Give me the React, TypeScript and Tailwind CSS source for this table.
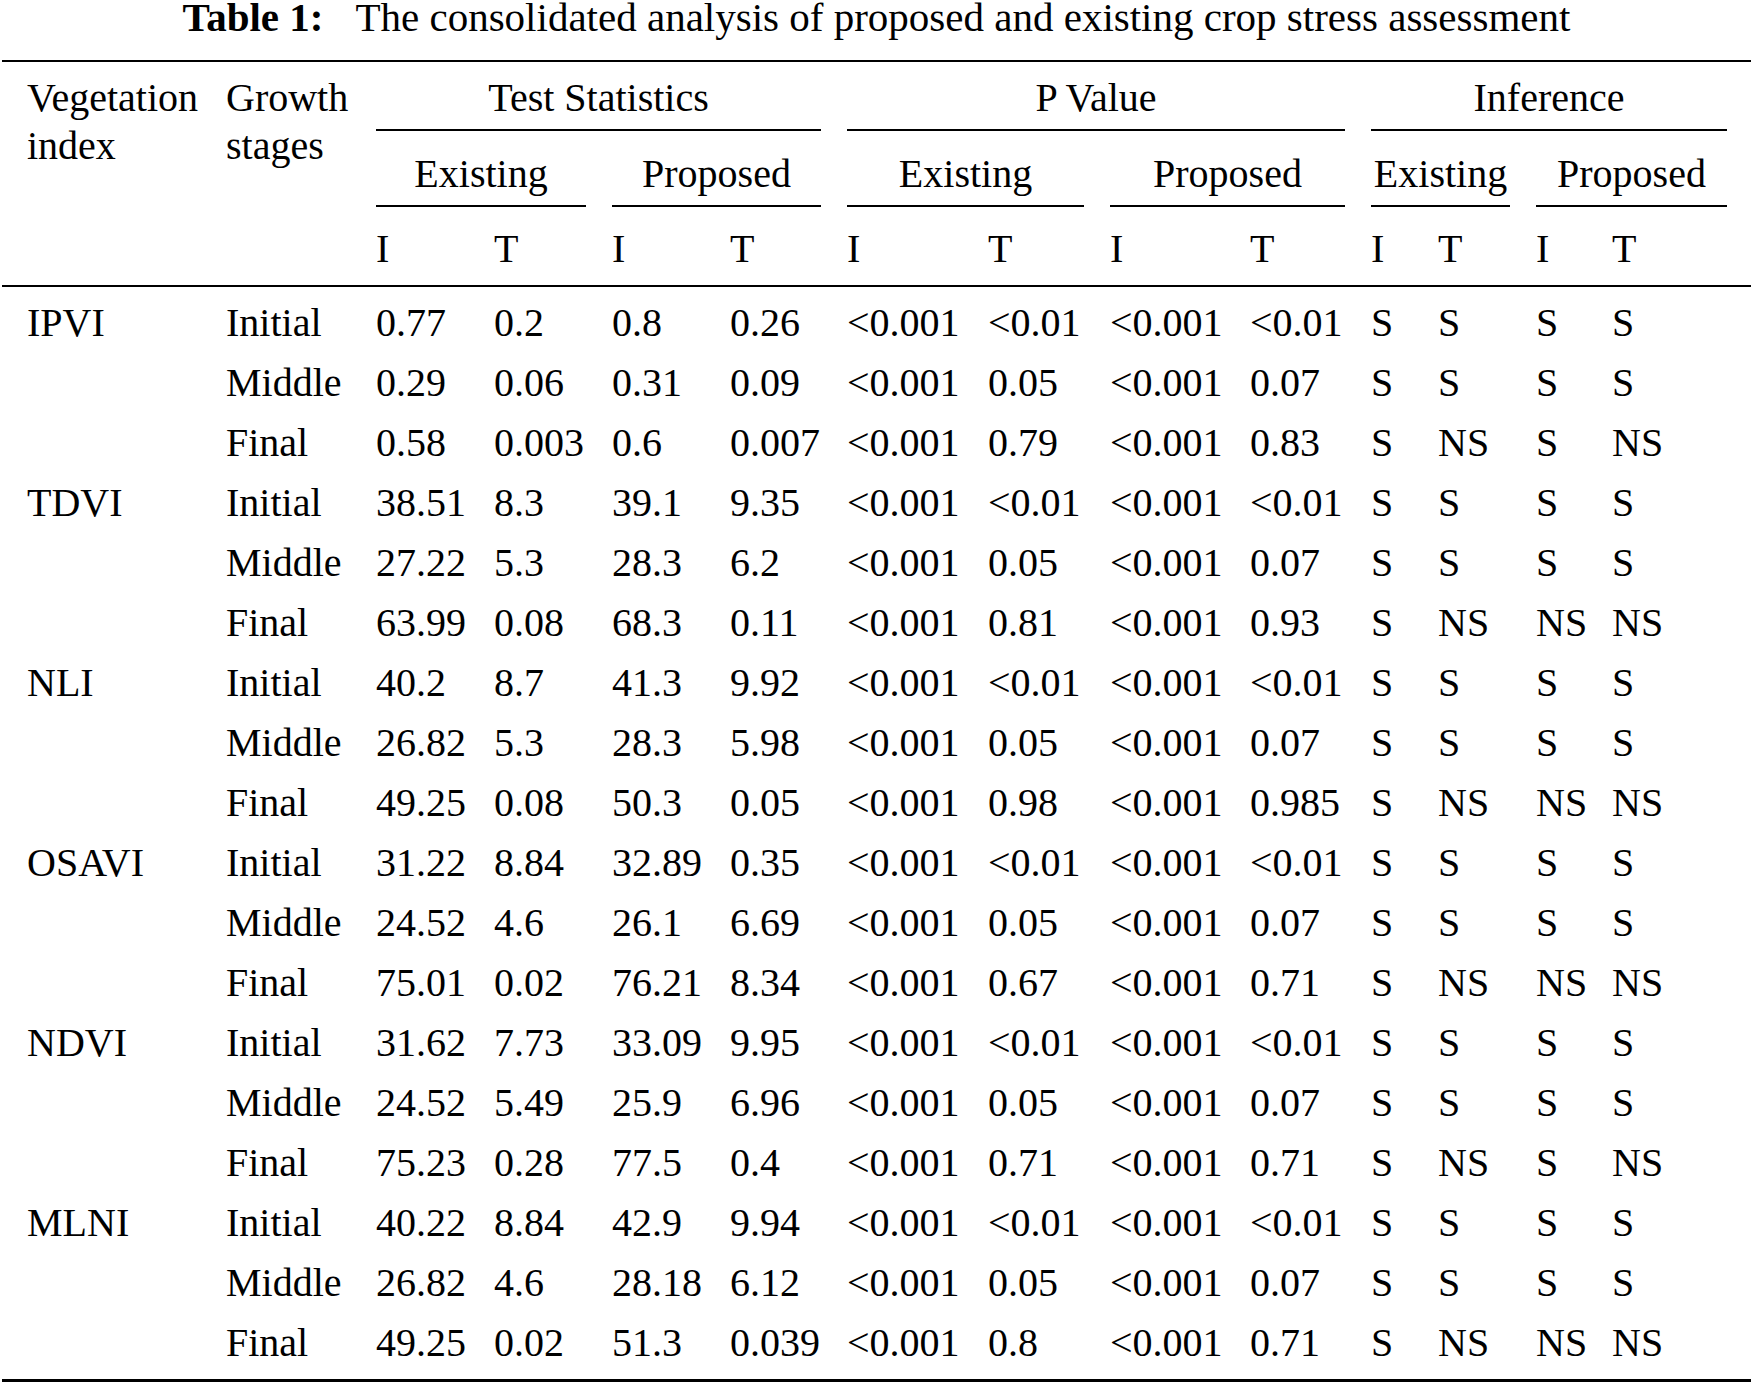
import React from "react";

const groups: { name: string; rows: string[][] }[] = [
  {
    name: "IPVI",
    rows: [
      ["Initial", "0.77", "0.2", "0.8", "0.26", "<0.001", "<0.01", "<0.001", "<0.01", "S", "S", "S", "S"],
      ["Middle", "0.29", "0.06", "0.31", "0.09", "<0.001", "0.05", "<0.001", "0.07", "S", "S", "S", "S"],
      ["Final", "0.58", "0.003", "0.6", "0.007", "<0.001", "0.79", "<0.001", "0.83", "S", "NS", "S", "NS"],
    ],
  },
  {
    name: "TDVI",
    rows: [
      ["Initial", "38.51", "8.3", "39.1", "9.35", "<0.001", "<0.01", "<0.001", "<0.01", "S", "S", "S", "S"],
      ["Middle", "27.22", "5.3", "28.3", "6.2", "<0.001", "0.05", "<0.001", "0.07", "S", "S", "S", "S"],
      ["Final", "63.99", "0.08", "68.3", "0.11", "<0.001", "0.81", "<0.001", "0.93", "S", "NS", "NS", "NS"],
    ],
  },
  {
    name: "NLI",
    rows: [
      ["Initial", "40.2", "8.7", "41.3", "9.92", "<0.001", "<0.01", "<0.001", "<0.01", "S", "S", "S", "S"],
      ["Middle", "26.82", "5.3", "28.3", "5.98", "<0.001", "0.05", "<0.001", "0.07", "S", "S", "S", "S"],
      ["Final", "49.25", "0.08", "50.3", "0.05", "<0.001", "0.98", "<0.001", "0.985", "S", "NS", "NS", "NS"],
    ],
  },
  {
    name: "OSAVI",
    rows: [
      ["Initial", "31.22", "8.84", "32.89", "0.35", "<0.001", "<0.01", "<0.001", "<0.01", "S", "S", "S", "S"],
      ["Middle", "24.52", "4.6", "26.1", "6.69", "<0.001", "0.05", "<0.001", "0.07", "S", "S", "S", "S"],
      ["Final", "75.01", "0.02", "76.21", "8.34", "<0.001", "0.67", "<0.001", "0.71", "S", "NS", "NS", "NS"],
    ],
  },
  {
    name: "NDVI",
    rows: [
      ["Initial", "31.62", "7.73", "33.09", "9.95", "<0.001", "<0.01", "<0.001", "<0.01", "S", "S", "S", "S"],
      ["Middle", "24.52", "5.49", "25.9", "6.96", "<0.001", "0.05", "<0.001", "0.07", "S", "S", "S", "S"],
      ["Final", "75.23", "0.28", "77.5", "0.4", "<0.001", "0.71", "<0.001", "0.71", "S", "NS", "S", "NS"],
    ],
  },
  {
    name: "MLNI",
    rows: [
      ["Initial", "40.22", "8.84", "42.9", "9.94", "<0.001", "<0.01", "<0.001", "<0.01", "S", "S", "S", "S"],
      ["Middle", "26.82", "4.6", "28.18", "6.12", "<0.001", "0.05", "<0.001", "0.07", "S", "S", "S", "S"],
      ["Final", "49.25", "0.02", "51.3", "0.039", "<0.001", "0.8", "<0.001", "0.71", "S", "NS", "NS", "NS"],
    ],
  },
];

const cols =
  "grid grid-cols-[199px_150px_118px_118px_118px_117px_141px_122px_140px_121px_67px_98px_76px_141px]";

export default function App() {
  return (
    <div className="w-[1753px] h-[1384px] bg-white text-black font-['Liberation_Serif','Times_New_Roman',serif] text-[40px]">
      <div className="text-center text-[41px] leading-[34px] whitespace-nowrap">
        <span className="font-bold">Table 1:</span>
        <span className="ml-[32px]">The consolidated analysis of proposed and existing crop stress assessment</span>
      </div>
      <div className="mt-[26px] mx-[2px] h-[2px] bg-black" />

      {/* Header */}
      <div className={`${cols} pl-[27px] whitespace-nowrap`}>
        <div className="col-start-1 row-start-1 row-span-5 pt-[12px] leading-[48px]">
          Vegetation
          <br />
          index
        </div>
        <div className="col-start-2 row-start-1 row-span-5 pt-[12px] leading-[48px]">
          Growth
          <br />
          stages
        </div>

        <div className="col-start-3 col-span-4 row-start-1 mr-[26px] pt-[12px] pb-[7px] leading-[48px] text-center">
          Test Statistics
        </div>
        <div className="col-start-7 col-span-4 row-start-1 mr-[26px] pt-[12px] pb-[7px] leading-[48px] text-center">
          P Value
        </div>
        <div className="col-start-11 col-span-4 row-start-1 mr-[26px] pt-[12px] pb-[7px] leading-[48px] text-center">
          Inference
        </div>

        <div className="col-start-3 col-span-4 row-start-2 mr-[26px] h-[2px] bg-black" />
        <div className="col-start-7 col-span-4 row-start-2 mr-[26px] h-[2px] bg-black" />
        <div className="col-start-11 col-span-4 row-start-2 mr-[26px] h-[2px] bg-black" />

        <div className="col-start-3 col-span-2 row-start-3 mr-[26px] pt-[19px] pb-[7px] leading-[48px] text-center">Existing</div>
        <div className="col-start-5 col-span-2 row-start-3 mr-[26px] pt-[19px] pb-[7px] leading-[48px] text-center">Proposed</div>
        <div className="col-start-7 col-span-2 row-start-3 mr-[26px] pt-[19px] pb-[7px] leading-[48px] text-center">Existing</div>
        <div className="col-start-9 col-span-2 row-start-3 mr-[26px] pt-[19px] pb-[7px] leading-[48px] text-center">Proposed</div>
        <div className="col-start-11 col-span-2 row-start-3 mr-[26px] pt-[19px] pb-[7px] leading-[48px] text-center">Existing</div>
        <div className="col-start-13 col-span-2 row-start-3 mr-[26px] pt-[19px] pb-[7px] leading-[48px] text-center">Proposed</div>

        <div className="col-start-3 col-span-2 row-start-4 mr-[26px] h-[2px] bg-black" />
        <div className="col-start-5 col-span-2 row-start-4 mr-[26px] h-[2px] bg-black" />
        <div className="col-start-7 col-span-2 row-start-4 mr-[26px] h-[2px] bg-black" />
        <div className="col-start-9 col-span-2 row-start-4 mr-[26px] h-[2px] bg-black" />
        <div className="col-start-11 col-span-2 row-start-4 mr-[26px] h-[2px] bg-black" />
        <div className="col-start-13 col-span-2 row-start-4 mr-[26px] h-[2px] bg-black" />

        <div className="col-start-3 row-start-5 pt-[18px] pb-[12px] leading-[48px]">I</div>
        <div className="col-start-4 row-start-5 pt-[18px] pb-[12px] leading-[48px]">T</div>
        <div className="col-start-5 row-start-5 pt-[18px] pb-[12px] leading-[48px]">I</div>
        <div className="col-start-6 row-start-5 pt-[18px] pb-[12px] leading-[48px]">T</div>
        <div className="col-start-7 row-start-5 pt-[18px] pb-[12px] leading-[48px]">I</div>
        <div className="col-start-8 row-start-5 pt-[18px] pb-[12px] leading-[48px]">T</div>
        <div className="col-start-9 row-start-5 pt-[18px] pb-[12px] leading-[48px]">I</div>
        <div className="col-start-10 row-start-5 pt-[18px] pb-[12px] leading-[48px]">T</div>
        <div className="col-start-11 row-start-5 pt-[18px] pb-[12px] leading-[48px]">I</div>
        <div className="col-start-12 row-start-5 pt-[18px] pb-[12px] leading-[48px]">T</div>
        <div className="col-start-13 row-start-5 pt-[18px] pb-[12px] leading-[48px]">I</div>
        <div className="col-start-14 row-start-5 pt-[18px] pb-[12px] leading-[48px]">T</div>
      </div>
      <div className="mx-[2px] h-[2px] bg-black" />

      {/* Body */}
      <div className={`${cols} pl-[27px] pt-[6px] pb-[6px] leading-[60px] whitespace-nowrap`}>
        {groups.map((g) =>
          g.rows.map((r, i) => (
            <React.Fragment key={g.name + i}>
              <div>{i === 0 ? g.name : ""}</div>
              {r.map((c, j) => (
                <div key={j}>{c}</div>
              ))}
            </React.Fragment>
          ))
        )}
      </div>
      <div className="mx-[2px] h-[3px] bg-black" />
    </div>
  );
}
